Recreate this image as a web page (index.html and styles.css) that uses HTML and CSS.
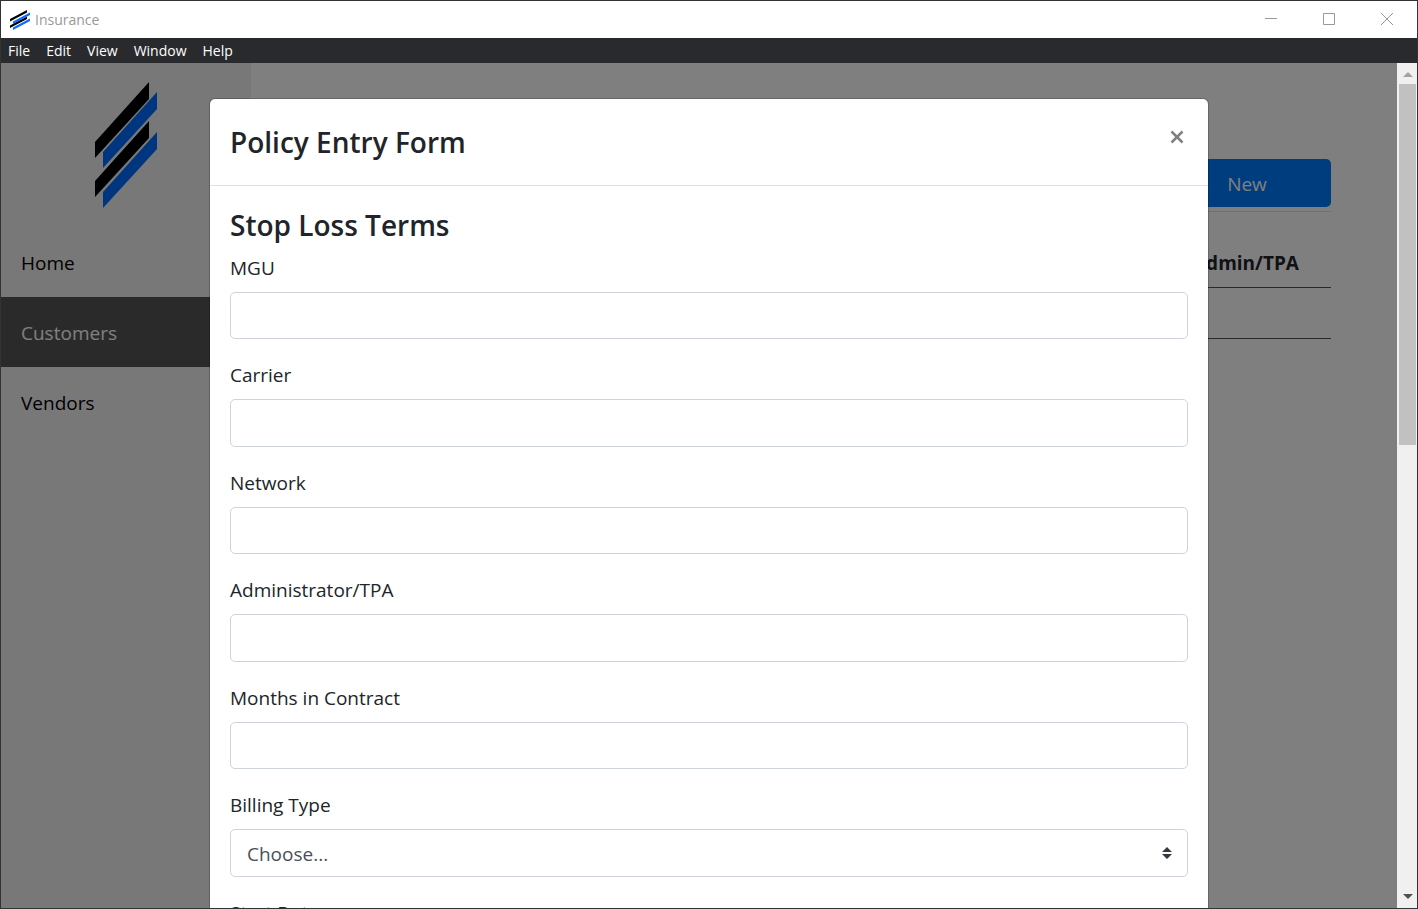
FILE: index.html
```html
<!DOCTYPE html>
<html lang="en">
<head>
<meta charset="utf-8">
<title>Insurance</title>
<link rel="stylesheet" href="styles.css">
</head>
<body>
<div class="window">
  <header class="titlebar">
    <svg class="titlebar-icon" width="20" height="20" viewBox="0 0 20 20" aria-hidden="true">
      <path fill="#000" d="M0 9 17 0V2.500L0 11.500ZM0 15.500 17 6.500V9L0 18Z"/>
      <path fill="#0a6cff" d="M3 11.500 20 2.500V5L3 14ZM3 17.500 20 8.500V11L3 20Z"/>
    </svg>
    <span class="titlebar-name">Insurance</span>
    <div class="titlebar-controls">
      <button type="button" class="win-btn" aria-label="Minimize"><svg width="12" height="12" viewBox="0 0 12 12"><path d="M0 5.500H12"/></svg></button>
      <button type="button" class="win-btn" aria-label="Maximize"><svg width="12" height="12" viewBox="0 0 12 12"><path d="M.5 .5H11.500V11.500H.5Z"/></svg></button>
      <button type="button" class="win-btn" aria-label="Close window"><svg width="12" height="12" viewBox="0 0 12 12"><path d="M0 0 12 12M12 0 0 12"/></svg></button>
    </div>
  </header>
  <nav class="menubar" aria-label="Application menu">
    <button type="button">File</button>
    <button type="button">Edit</button>
    <button type="button">View</button>
    <button type="button">Window</button>
    <button type="button">Help</button>
  </nav>
  <div class="viewport">
    <div class="app">
      <aside class="sidebar">
        <div class="brand">
          <svg width="62" height="126" viewBox="0 0 62 126" role="img" aria-label="Insurance logo">
            <path fill="#000" d="M54 0V17L0 76V60ZM54 39V56L0 115V99Z"/>
            <path fill="#006aff" d="M62 10V27L8 86V70ZM62 50V67L8 126V110Z"/>
          </svg>
        </div>
        <nav class="side-nav" aria-label="Sections">
          <a href="#home">Home</a>
          <a href="#customers" class="active" aria-current="page">Customers</a>
          <a href="#vendors">Vendors</a>
        </nav>
      </aside>
      <main class="main">
        <div class="toolbar">
          <button type="button" class="btn-primary">New</button>
        </div>
        <table class="policies">
          <thead><tr><td></td><th scope="col">Admin/TPA</th></tr></thead>
          <tbody><tr><td></td><td></td></tr></tbody>
        </table>
      </main>
    </div>
    <div class="backdrop">
      <section class="modal" role="dialog" aria-modal="true" aria-labelledby="modal-title">
        <header class="modal-header">
          <h1 id="modal-title">Policy Entry Form</h1>
          <button type="button" class="modal-close" aria-label="Close"><svg width="14" height="14" viewBox="0 0 14 14"><path d="M1.500 1.500 12.500 12.500M12.500 1.500 1.500 12.500"/></svg></button>
        </header>
        <form class="modal-body">
          <h2>Stop Loss Terms</h2>
          <div class="fields">
            <div class="field"><label for="mgu">MGU</label><input type="text" id="mgu"></div>
            <div class="field"><label for="carrier">Carrier</label><input type="text" id="carrier"></div>
            <div class="field"><label for="network">Network</label><input type="text" id="network"></div>
            <div class="field"><label for="tpa">Administrator/TPA</label><input type="text" id="tpa"></div>
            <div class="field"><label for="months">Months in Contract</label><input type="text" id="months"></div>
            <div class="field">
              <label for="billing">Billing Type</label>
              <div class="select-wrap">
                <select id="billing"><option>Choose...</option></select>
                <svg class="select-arrows" width="10" height="12" viewBox="0 0 10 12" aria-hidden="true"><path d="M5 0 10 5H0ZM5 12 0 7H10Z"/></svg>
              </div>
            </div>
            <div class="field"><label for="start">Start Date</label><input type="text" id="start"></div>
          </div>
        </form>
      </section>
      <div class="scrollbar" aria-hidden="true">
        <svg class="arrow-up" width="10" height="5" viewBox="0 0 10 5"><path d="M5 0 10 5H0Z"/></svg>
        <div class="scroll-track"><div class="scroll-thumb"></div></div>
        <svg class="arrow-down" width="10" height="5" viewBox="0 0 10 5"><path d="M5 5 0 0H10Z"/></svg>
      </div>
    </div>
  </div>
</div>
</body>
</html>
```
FILE: styles.css
```css
* { box-sizing: border-box; }

body {
  margin: 0;
  font-family: "Open Sans", "Noto Sans", sans-serif;
  font-size: 19px;
  line-height: 30px;
  color: #212529;
}

button, input, select { font: inherit; }
button { border: 0; padding: 0; background: none; cursor: pointer; }

.window {
  display: flex;
  flex-direction: column;
  height: 100vh;
  border: 1px solid #333336;
  background: #fff;
  overflow: hidden;
}

/* Window chrome */
.titlebar {
  display: flex;
  align-items: center;
  flex: none;
  height: 37px;
  padding-left: 9px;
  gap: 5px;
}
.titlebar-name { font-size: 14px; color: #999; }
.titlebar-controls { display: flex; height: 100%; margin-left: auto; padding: 0 1px 2px 0; }
.win-btn { display: flex; align-items: center; justify-content: center; width: 58px; }
.win-btn svg { fill: none; stroke: #999; }

.menubar {
  display: flex;
  flex: none;
  gap: 16px;
  height: 25px;
  padding: 0 7px;
  background: #292a2d;
}
.menubar button { font-size: 14px; line-height: 25px; color: #fff; }

.viewport { position: relative; flex: 1; min-height: 0; overflow: hidden; }
.app { display: flex; height: 100%; }

/* Sidebar */
.sidebar { flex: none; width: 250px; background: #f1f1f1; }
.brand { display: flex; justify-content: center; padding: 19px 0; }
.side-nav a {
  display: block;
  padding: 21px 20px 19px;
  color: #000;
  text-decoration: none;
}
.side-nav .active { background: #555; color: #fff; }

/* Customer list */
.main { flex: 1; padding: 96px 86px 0 80px; }
.toolbar {
  display: flex;
  justify-content: flex-end;
  padding-bottom: 4px;
  border-bottom: 1px solid #e0e0e0;
}
.btn-primary {
  width: 168px;
  height: 48px;
  padding-top: 2px;
  border-radius: 5px;
  background: #007bff;
  color: #fff;
}
.policies { width: 100%; margin-top: 24px; border-collapse: collapse; }
.policies th, .policies td { height: 51px; padding: 0; border-bottom: 1px solid #555; }
.policies th { width: 138px; padding-top: 3px; text-align: left; font-weight: 700; }

/* Dialog */
.backdrop { position: absolute; inset: 0; padding: 35px 20px 0; background: rgba(0, 0, 0, .5); }
.modal {
  max-width: 1000px;
  margin: 0 auto;
  border: 1px solid rgba(0, 0, 0, .2);
  border-radius: 6px;
  background: #fff;
  background-clip: padding-box;
}
.modal-header {
  display: flex;
  justify-content: space-between;
  align-items: flex-start;
  padding: 20px;
  border-bottom: 1px solid #dee2e6;
}
.modal h1, .modal h2 { margin: 0; font-size: 28px; font-weight: 600; }
.modal h1 { line-height: 46px; }
.modal h2 { margin-bottom: 8px; line-height: 38px; }
.modal-close { display: flex; padding: 11px 4px; }
.modal-close svg { fill: none; stroke: #808080; stroke-width: 2.5; }
.modal-body { padding: 20px; }

.fields { display: flex; flex-direction: column; gap: 18px; }
.fields label { padding-top: 2px; }
.field { display: flex; flex-direction: column; gap: 9px; }
.fields label { line-height: 29px; }
.field:nth-child(n+2) { padding-top: 2px; }
.field input, .field select {
  width: 100%;
  height: 47px;
  padding: 0 16px;
  border: 1px solid #ced4da;
  border-radius: 5px;
  background: #fff;
  color: #495057;
}
.field:nth-child(even) input, .field select { height: 48px; }
.field select { padding-top: 2px; }
.select-wrap { position: relative; display: flex; }
.select-wrap select { appearance: none; }
.select-arrows { position: absolute; right: 16px; top: 18px; fill: #343a40; pointer-events: none; }

/* Scrollbar */
.scrollbar {
  position: absolute;
  top: 0;
  right: 0;
  bottom: 0;
  display: flex;
  flex-direction: column;
  align-items: center;
  gap: 7px;
  width: 20px;
  padding: 9px 1px 9px 2px;
  background: #f0f0f0;
}
.arrow-up { flex: none; fill: #a3a3a3; }
.arrow-down { flex: none; fill: #505050; }
.scroll-track { flex: 1; width: 100%; }
.scroll-thumb { height: 45%; background: #c1c1c1; }
```
